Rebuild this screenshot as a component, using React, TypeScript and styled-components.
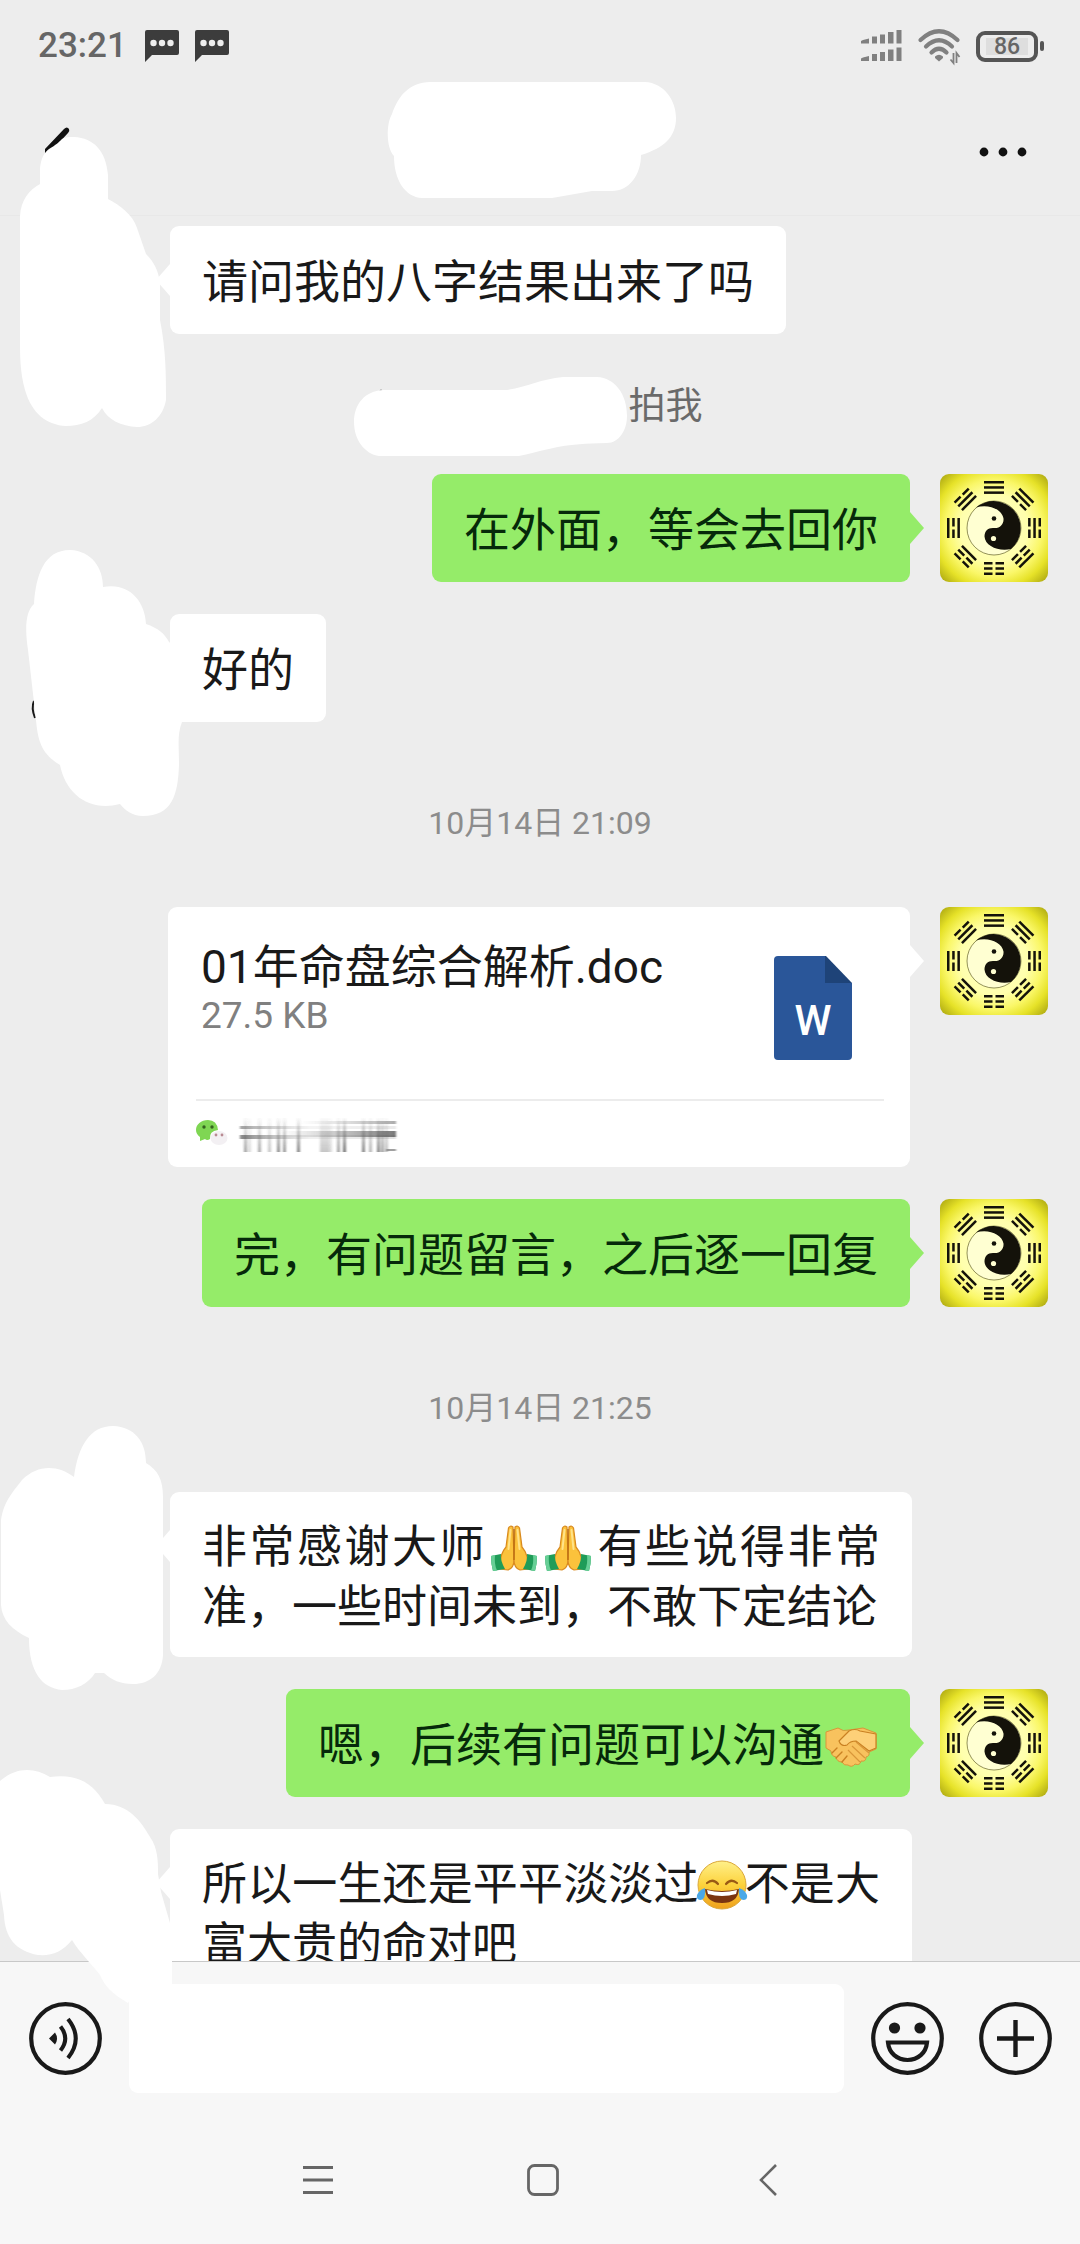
import React from 'react';
import styled, { createGlobalStyle } from 'styled-components';

const FONT = `Roboto, "Noto Sans CJK SC", "Noto Sans", sans-serif`;

const GlobalStyle = createGlobalStyle`
  *, *::before, *::after { box-sizing: border-box; }
  body { margin: 0; background: #ededed; font-family: ${FONT}; }
  button, input { font: inherit; color: inherit; border: 0; padding: 0; background: none; }
  p, h1 { margin: 0; font-weight: 400; }
`;

const Page = styled.div`
  display: flex;
  flex-direction: column;
  height: 100vh;
  overflow: hidden;
  background: #ededed;
  color: #191919;
`;

const StatusBar = styled.div`
  flex: none;
  display: flex;
  align-items: center;
  justify-content: space-between;
  height: 92px;
  padding: 0 36px 0 38px;
`;

const StatusGroup = styled.div`
  display: flex;
  align-items: center;
  gap: 16px;
`;

const Clock = styled.span`
  font-size: 35px;
  line-height: 40px;
  font-weight: 500;
  color: #666;
  margin-right: 2px;
`;

const Battery = styled.div`
  display: flex;
  align-items: center;
  gap: 2px;
  &::after {
    content: '';
    width: 4px;
    height: 10px;
    border-radius: 2px;
    background: #555;
  }
`;

const BatteryBody = styled.span`
  display: grid;
  place-items: center;
  width: 62px;
  height: 31px;
  border: 4px solid #555;
  border-radius: 9px;
  font-size: 23px;
  line-height: 23px;
  font-weight: 500;
  color: #666;
  background: linear-gradient(#dedede, #dedede) center / 42px 17px no-repeat;
`;

const Header = styled.header`
  flex: none;
  display: flex;
  align-items: center;
  justify-content: space-between;
  height: 124px;
  padding: 0 41px 4px;
  border-bottom: 1px solid #e8e8e8;
`;

const HeaderButton = styled.button`
  display: grid;
  place-items: center;
  width: 72px;
  height: 72px;
`;

const Drawing = styled.svg`
  display: block;
  flex: none;
  overflow: visible;
`;

const Chat = styled.main`
  flex: 1;
  min-height: 0;
  display: flex;
  flex-direction: column;
  gap: 32px;
  padding: 10px 32px 0;
  & > * { flex: none; }
`;

const Row = styled.div<{ $mine?: boolean }>`
  display: flex;
  flex-direction: ${p => (p.$mine ? 'row-reverse' : 'row')};
  align-items: flex-start;
  gap: 30px;
`;

const AvatarSlot = styled.div`
  position: relative;
  flex: none;
  width: 108px;
  height: 108px;
`;

const Cover = styled.svg`
  position: absolute;
  inset: 0;
  z-index: 2;
  overflow: visible;
  pointer-events: none;
`;

const Bubble = styled.div<{ $mine?: boolean; $color: string }>`
  position: relative;
  min-height: 108px;
  max-width: calc(100% - 274px);
  border-radius: 9px;
  background: ${p => p.$color};
  &::after {
    content: '';
    position: absolute;
    top: 38px;
    ${p => (p.$mine ? 'left: 100%;' : 'right: 100%;')}
    width: 14px;
    height: 32px;
    background: inherit;
    clip-path: ${p =>
      p.$mine ? 'polygon(0 0, 100% 50%, 0 100%)' : 'polygon(100% 0, 0 50%, 100% 100%)'};
  }
`;

const Message = styled.p<{ $long?: boolean; $mine?: boolean }>`
  padding: 26px 32px 19px;
  font-size: ${p => (p.$long ? 45 : 46)}px;
  line-height: 60px;
  text-align: ${p => (p.$long ? 'justify' : 'left')};
  color: ${p => (p.$mine ? '#06290a' : '#191919')};
`;

const Emoji = styled.svg<{ $gap: number }>`
  display: inline-block;
  width: 52px;
  height: 52px;
  margin: -8px ${p => p.$gap}px;
  vertical-align: -3px;
`;

const TimeStamp = styled.time`
  padding: 51px 0 34px;
  font-size: 32px;
  line-height: 36px;
  text-align: center;
  color: #8c8c8c;
`;

const Notice = styled.p`
  display: flex;
  align-items: center;
  justify-content: center;
  height: 76px;
  padding: 6px 24px 0 0;
  font-size: 37px;
  line-height: 44px;
  color: #6a6a6a;
`;

const FileBubble = styled(Bubble)`
  display: flex;
  flex-direction: column;
  flex: 1;
  padding: 0 26px 0 28px;
`;

const FileTop = styled.div`
  display: flex;
  justify-content: space-between;
  height: 194px;
  padding: 30px 32px 0 5px;
  border-bottom: 2px solid #ececec;
`;

const FileName = styled.h1`
  font-size: 46px;
  line-height: 60px;
`;

const FileSize = styled.p`
  font-size: 37px;
  line-height: 38px;
  color: #808080;
`;

const FileIcon = styled.div`
  display: grid;
  justify-items: center;
  align-items: end;
  flex: none;
  width: 78px;
  height: 104px;
  margin-top: 19px;
  padding-bottom: 14px;
  border-radius: 4px;
  background: linear-gradient(#1e4378, #1e4378) top right / 27px 27px no-repeat, #2a5699;
  clip-path: polygon(0 0, 52px 0, 100% 27px, 100% 100%, 0 100%);
  font-size: 42px;
  line-height: 50px;
  font-weight: 500;
  color: #fff;
`;

const FileSource = styled.div`
  display: flex;
  align-items: center;
  gap: 12px;
  height: 66px;
`;

const Composer = styled.form`
  position: relative;
  z-index: 1;
  flex: none;
  display: flex;
  align-items: center;
  gap: 27px;
  height: 154px;
  padding: 0 28px 0 29px;
  border-top: 1px solid #c8c8c8;
  background: #f7f7f7;
`;

const Field = styled.input`
  flex: 1;
  min-width: 0;
  height: 109px;
  padding: 0 24px;
  border-radius: 9px;
  background: #fff;
  font-size: 46px;
  outline: none;
`;

const ToolGroup = styled.div`
  display: flex;
  gap: 35px;
`;

const Tool = styled.button`
  display: block;
  width: 73px;
  height: 73px;
`;

const NavBar = styled.nav`
  position: relative;
  flex: none;
  display: flex;
  align-items: center;
  justify-content: center;
  gap: 165px;
  height: 129px;
  padding-left: 6px;
  background: #f7f7f7;
`;

const NavButton = styled.button`
  display: grid;
  place-items: center;
  width: 60px;
  height: 60px;
`;

const ChatGlyph = () => (
  <Drawing width="34" height="32" viewBox="0 0 34 32" aria-hidden="true">
    <path d="M2 0H32Q34 0 34 2V23Q34 25 32 25H7L0 32V2Q0 0 2 0Z" fill="#3c3c3c" />
    <g fill="#eee">
      <circle cx="8.5" cy="13" r="3.2" />
      <circle cx="17" cy="13" r="3.2" />
      <circle cx="25.5" cy="13" r="3.2" />
    </g>
  </Drawing>
);

const Signal = () => (
  <Drawing width="41" height="32" viewBox="0 0 41 32" aria-hidden="true">
    {[0, 17.5].map(y => (
      <g key={y} fill="#808080" transform={`translate(0 ${y})`}>
        <path d="M0 11L2 10L8 8.500V13.500H0Z" />
        <rect x="11" y="6.500" width="5" height="7" />
        <rect x="19" y="4.500" width="5" height="9" />
        <rect x="27" y="2" width="5.500" height="11.500" />
        <rect x="35.500" y="0" width="5" height="13.500" />
      </g>
    ))}
  </Drawing>
);

const Wifi = () => (
  <Drawing width="42" height="35" viewBox="0 0 42 35" aria-hidden="true">
    <g fill="none" stroke="#808080" strokeWidth="4.200" strokeLinecap="round">
      <path d="M2.500 11Q21 -6.500 39.500 11" />
      <path d="M8 17.500Q21 5 34 17.500" />
      <path d="M13.500 23.500Q21 16 28.500 23.500" />
    </g>
    <path d="M17 27.500Q21 24 25 27.500V29L21 32.500L17 29Z" fill="#808080" />
    <path d="M35.500 24V34L32.500 30.500M38.500 34V24L41.500 28" fill="none" stroke="#808080" strokeWidth="1.800" />
  </Drawing>
);

const TRIGRAMS = ['111', '110', '010', '100', '000', '001', '101', '011'];

const Avatar = ({ id }: { id: string }) => (
  <AvatarSlot>
    <Drawing width="108" height="108" viewBox="0 0 108 108" role="img" aria-label="头像">
      <defs>
        <radialGradient id={id} cx="50%" cy="50%" r="70%">
          <stop offset="0" stopColor="#ffffc8" />
          <stop offset="0.45" stopColor="#ffffac" />
          <stop offset="0.64" stopColor="#faf768" />
          <stop offset="0.8" stopColor="#e6e228" />
          <stop offset="1" stopColor="#a9a410" />
        </radialGradient>
      </defs>
      <rect width="108" height="108" rx="9" fill={`url(#${id})`} />
      {TRIGRAMS.map((lines, i) => (
        <g key={i} transform={`rotate(${i * 45} 54 54)`} fill="#14120a">
          {lines.split('').map((solid, j) => {
            const y = 7 + j * 5.2;
            return solid === '1' ? (
              <rect key={j} x="44" y={y} width="20" height="2.500" />
            ) : (
              <path key={j} d={`M44 ${y}h8.500v2.500h-8.500zM55.500 ${y}h8.500v2.500h-8.500z`} />
            );
          })}
        </g>
      ))}
      <circle cx="54" cy="54" r="27" fill="#ffffd2" stroke="#4a4610" strokeWidth="0.600" />
      <path
        d="M36 33.500A27 27 0 0 1 71 75C59 78 45 72 44.500 62.500C44.500 57 48 53.500 54 54C60 54.500 64 50 63.500 44.500C62 35 48 29.500 36 33.500Z"
        fill="#14120a"
      />
      <circle cx="54" cy="44.500" r="2.300" fill="#14120a" />
      <circle cx="53.500" cy="64.500" r="2.600" fill="#ffffd2" />
    </Drawing>
  </AvatarSlot>
);

const CoveredAvatar = ({ top, d, mark }: { top: number; d: string; mark?: string }) => (
  <AvatarSlot>
    <Cover width="108" height="108" viewBox={`32 ${top} 108 108`} aria-hidden="true">
      {mark && <path d={mark} fill="none" stroke="#191919" strokeWidth="2" />}
      <path d={d} fill="#fff" />
    </Cover>
  </AvatarSlot>
);

const Pray = () => (
  <Emoji $gap={1} viewBox="0 0 52 52" role="img" aria-label="双手合十">
    <path d="M25 5Q22 3 20.500 6L18 25Q11 33 12 47L20 48Q26 46 26 38Z" fill="#fbc23c" stroke="#d98a1e" strokeWidth="1.200" />
    <path d="M27 5Q30 3 31.500 6L34 25Q41 33 40 47L32 48Q26 46 26 38Z" fill="#fbc23c" stroke="#d98a1e" strokeWidth="1.200" />
    <path d="M22.500 8L20.500 27M29.500 8L31.500 27" stroke="#ffe38a" strokeWidth="2" strokeLinecap="round" />
    <path d="M26 7V38" stroke="#b96a10" strokeWidth="1.300" />
    <path d="M3 34L13 32Q12 38 17 47L5 49Q3 42 3 34Z" fill="#1f9c58" />
    <path d="M49 34L39 32Q40 38 35 47L47 49Q49 42 49 34Z" fill="#1f9c58" />
    <path d="M3 34L7 33Q6 42 9 48.500L5 49Q3 42 3 34Z" fill="#67cf96" />
    <path d="M49 34L45 33Q46 42 43 48.500L47 49Q49 42 49 34Z" fill="#67cf96" />
  </Emoji>
);

const Handshake = () => (
  <Emoji $gap={1} viewBox="0 0 52 52" role="img" aria-label="握手">
    <path d="M1 12L13 8Q18 12 24 10L38 8L51 13V29L44 32Q45 36 41 37Q41 42 36 41Q35 46 30 44Q27 48 23 45Q19 46 17 42Q12 42 11 37Q6 36 6 31L1 28Z" fill="#f8c25e" stroke="#d9973a" strokeWidth="1" />
    <path d="M14 21L24 11Q30 8 35 11L51 14V28L44 31L31 21Q25 21 22 25Q16 27 14 21Z" fill="#fdd078" stroke="#c98022" strokeWidth="1.200" strokeLinejoin="round" />
    <path d="M31 22L44 33M27 26L40 38M23 30L35 42" fill="none" stroke="#d9973a" strokeWidth="1.200" />
    <path d="M7 33L12 28M11 38L17 32M17 42L22 36" stroke="#c98022" strokeWidth="1.400" strokeLinecap="round" />
  </Emoji>
);

const Joy = () => (
  <Emoji $gap={-3} viewBox="0 0 52 52" role="img" aria-label="笑哭">
    <defs>
      <linearGradient id="joy" x1="0" y1="0" x2="0" y2="1">
        <stop offset="0" stopColor="#fff08a" />
        <stop offset="0.500" stopColor="#fcd23c" />
        <stop offset="1" stopColor="#efa01c" />
      </linearGradient>
    </defs>
    <circle cx="26" cy="26" r="24" fill="url(#joy)" stroke="#dba83a" strokeWidth="1" />
    <path d="M11 24Q17 19 22 25M30 25Q35 19 41 24" fill="none" stroke="#9a5a14" strokeWidth="2.200" strokeLinecap="round" />
    <path d="M9 30Q26 34 43 30Q42 44 26 44Q10 44 9 30Z" fill="#7a3410" />
    <path d="M11 31Q26 35 41 31L40 35Q26 39 12 35Z" fill="#fff" />
    <path d="M9 29Q10 40 5 41Q0 41 1 36Q3 31 9 29Z" fill="#4aa8e8" />
    <path d="M43 29Q42 40 47 41Q52 41 51 36Q49 31 43 29Z" fill="#4aa8e8" />
  </Emoji>
);

const WeChatMark = () => (
  <Drawing width="32" height="34" viewBox="0 0 32 34" aria-hidden="true">
    <path d="M12 3C5 3 0 7.500 0 13Q0 17 4 20L4 24L9 22Q11 24 14 22Q13 14 22 13Q21 3 12 3Z" fill="#7fd653" />
    <circle cx="8" cy="10" r="1.700" fill="#35641f" />
    <circle cx="16" cy="10" r="1.700" fill="#35641f" />
    <ellipse cx="23" cy="21" rx="8.500" ry="7" fill="#f3f0f3" />
    <circle cx="20" cy="18" r="1.400" fill="#b98a92" />
    <circle cx="26" cy="18" r="1.400" fill="#b98a92" />
  </Drawing>
);

const SMEAR_BARS = [
  [4, 0.5], [8, 0.2], [18, 0.45], [28, 0.3], [37, 0.6], [43, 0.55], [57, 0.65],
  [80, 0.3], [83, 0.3], [86, 0.3], [89, 0.2], [97, 0.5], [103, 0.75], [122, 0.65],
  [129, 0.4], [137, 0.65], [141, 0.5], [145, 0.35],
];

const Smear = () => (
  <Drawing width="158" height="38" viewBox="0 0 158 38" aria-hidden="true">
    <defs>
      <linearGradient id="fall" x1="0" y1="0" x2="0" y2="1">
        <stop offset="0" stopColor="#444" stopOpacity="0.05" />
        <stop offset="1" stopColor="#444" />
      </linearGradient>
      <linearGradient id="across" x1="0" y1="0" x2="1" y2="0">
        <stop offset="0" stopColor="#444" stopOpacity="0.8" />
        <stop offset="0.450" stopColor="#888" stopOpacity="0.150" />
        <stop offset="1" stopColor="#444" stopOpacity="0.2" />
      </linearGradient>
      <linearGradient id="rise" x1="0" y1="0" x2="1" y2="0">
        <stop offset="0" stopColor="#888" stopOpacity="0" />
        <stop offset="1" stopColor="#444" stopOpacity="0.9" />
      </linearGradient>
      <filter id="soft" x="-5%" y="-10%" width="110%" height="120%">
        <feGaussianBlur stdDeviation="0.9 0.5" />
      </filter>
    </defs>
    <g filter="url(#soft)">
      {SMEAR_BARS.map(([x, o]) => (
        <rect key={x} x={x} y="3" width="3" height="34" fill="url(#fall)" opacity={o} />
      ))}
      <rect x="0" y="11" width="156" height="3" fill="url(#across)" opacity="0.6" />
      <rect x="0" y="20" width="156" height="4" fill="url(#across)" opacity="0.8" />
      <rect x="40" y="16" width="116" height="6" fill="url(#rise)" opacity="0.8" />
      <rect x="60" y="6" width="96" height="3" fill="url(#rise)" opacity="0.5" />
      <rect x="146" y="34" width="10" height="2" fill="#777" opacity="0.7" />
    </g>
  </Drawing>
);

export default function App() {
  return (
    <Page>
      <GlobalStyle />
      <StatusBar>
        <StatusGroup>
          <Clock>23:21</Clock>
          <ChatGlyph />
          <ChatGlyph />
        </StatusGroup>
        <StatusGroup>
          <Signal />
          <Wifi />
          <Battery>
            <BatteryBody>86</BatteryBody>
          </Battery>
        </StatusGroup>
      </StatusBar>

      <Header>
        <HeaderButton type="button" aria-label="返回">
          <Drawing width="72" height="72" viewBox="41 116 72 72" aria-hidden="true">
            <path d="M45 153L45 149L64 129Q67 126 69 129Q70 131 68 133L56 146L46 153Z" fill="#111" />
          </Drawing>
        </HeaderButton>
        <Drawing width="290" height="119" viewBox="395 92 290 119" aria-hidden="true">
          <path
            d="M430 82H645C664 83 676 100 676 118C676 137 664 148 641 155C641 175 629 191 612 191H592L552 198H422C405 197 394 180 394 156C386 148 386 124 392 114C399 94 410 83 430 82Z"
            fill="#fff"
          />
        </Drawing>
        <HeaderButton type="button" aria-label="更多">
          <Drawing width="48" height="10" viewBox="0 0 48 10" aria-hidden="true">
            <circle cx="5" cy="5" r="4.400" fill="#111" />
            <circle cx="24" cy="5" r="4.400" fill="#111" />
            <circle cx="43" cy="5" r="4.400" fill="#111" />
          </Drawing>
        </HeaderButton>
      </Header>

      <Chat>
        <Row>
          <CoveredAvatar
            top={226}
            d="M40 184V168C41 158 44 153 49 149C56 145 59 142 62 139C66 137 69 137 74 137C94 138 106 151 108 175V199C120 205 133 215 137 228L146 254C154 262 158 270 160 282V320C166 350 166 375 166 400C163 417 151 427 137 427C121 426 108 420 102 408C94 421 81 426 66 426C47 425 32 414 25 390C20 372 20 355 20 340V216C21 200 29 190 40 184Z"
          />
          <Bubble $color="#fff">
            <Message>请问我的八字结果出来了吗</Message>
          </Bubble>
        </Row>

        <Notice>
          <Drawing width="275" height="72" viewBox="353 371 275 72" aria-hidden="true">
            <circle cx="380" cy="391" r="1.500" fill="#777" />
            <path
              d="M382 390H506C526 387 540 379 562 377H596C614 378 626 394 626 416C626 430 618 443 606 443C560 444 558 447 518 456H378C364 454 353 440 353 422C353 404 364 391 382 390Z"
              fill="#fff"
            />
          </Drawing>
          拍我
        </Notice>

        <Row $mine>
          <Avatar id="gold1" />
          <Bubble $mine $color="#95ec69">
            <Message $mine>在外面，等会去回你</Message>
          </Bubble>
        </Row>

        <Row>
          <CoveredAvatar
            top={614}
            mark="M34 701Q31 708 35 718"
            d="M34 604C36 575 44 550 70 550C92 551 103 568 103 587C128 582 145 600 146 624C158 628 165 634 169 642L182 652V722C177 735 179 745 179 765C178 795 172 816 143 816C132 816 125 810 120 804C90 812 66 795 60 765C44 755 38 745 36 720L28 650C25 630 25 612 34 604Z"
          />
          <Bubble $color="#fff">
            <Message>好的</Message>
          </Bubble>
        </Row>

        <TimeStamp>10月14日 21:09</TimeStamp>

        <Row $mine>
          <Avatar id="gold2" />
          <FileBubble $mine $color="#fff">
            <FileTop>
              <div>
                <FileName>01年命盘综合解析.doc</FileName>
                <FileSize>27.5 KB</FileSize>
              </div>
              <FileIcon>W</FileIcon>
            </FileTop>
            <FileSource>
              <WeChatMark />
              <Smear />
            </FileSource>
          </FileBubble>
        </Row>

        <Row $mine>
          <Avatar id="gold3" />
          <Bubble $mine $color="#95ec69">
            <Message $mine>完，有问题留言，之后逐一回复</Message>
          </Bubble>
        </Row>

        <TimeStamp>10月14日 21:25</TimeStamp>

        <Row>
          <CoveredAvatar
            top={1492}
            d="M74 1477C78 1446 90 1426 113 1426C135 1427 146 1442 146 1463C158 1470 163 1480 163 1497V1655C162 1674 150 1684 133 1684C120 1684 112 1680 104 1673H95C88 1684 76 1690 62 1690C42 1688 29 1672 29 1638C12 1630 2 1620 1 1605V1520C4 1500 14 1491 22 1480C38 1464 58 1465 74 1477Z"
          />
          <Bubble $color="#fff">
            <Message $long>
              非常感谢大师
              <Pray />
              <Pray />
              有些说得非常准，一些时间未到，不敢下定结论
            </Message>
          </Bubble>
        </Row>

        <Row $mine>
          <Avatar id="gold4" />
          <Bubble $mine $color="#95ec69">
            <Message $mine>
              嗯，后续有问题可以沟通
              <Handshake />
            </Message>
          </Bubble>
        </Row>

        <Row>
          <CoveredAvatar
            top={1829}
            d="M0 1781C16 1767 34 1767 50 1777C78 1773 94 1784 105 1804C128 1804 141 1821 150 1837C158 1848 158 1862 158 1874L161 1892L172 1930V1984H140L128 2003C112 1994 104 1985 100 1975C90 1962 80 1953 72 1940C62 1952 52 1956 38 1955C16 1951 5 1938 4 1915L0 1890Z"
          />
          <Bubble $color="#fff">
            <Message $long>
              所以一生还是平平淡淡过
              <Joy />
              不是大富大贵的命对吧
            </Message>
          </Bubble>
        </Row>
      </Chat>

      <Composer onSubmit={e => e.preventDefault()}>
        <Tool type="button" aria-label="语音">
          <Drawing width="73" height="73" viewBox="0 0 73 73" aria-hidden="true">
            <circle cx="36.500" cy="36.500" r="34.300" fill="none" stroke="#191919" strokeWidth="4.200" />
            <path d="M20 36.500L26 30.500Q30 36.500 26 42.500Z" fill="#191919" />
            <path d="M31.500 24.500Q41 36.500 31.500 48.500M39 17Q54.500 36.500 39 56" fill="none" stroke="#191919" strokeWidth="4" />
          </Drawing>
        </Tool>
        <Field type="text" aria-label="输入消息" />
        <ToolGroup>
          <Tool type="button" aria-label="表情">
            <Drawing width="73" height="73" viewBox="0 0 73 73" aria-hidden="true">
              <circle cx="36.500" cy="36.500" r="34.300" fill="none" stroke="#191919" strokeWidth="4.200" />
              <circle cx="23.500" cy="26" r="5.600" fill="#191919" />
              <circle cx="49" cy="26" r="5.600" fill="#191919" />
              <path d="M17 40.500H56C55 51 47 58 36.500 58C26 58 18 51 17 40.500Z" fill="none" stroke="#191919" strokeWidth="4.200" />
            </Drawing>
          </Tool>
          <Tool type="button" aria-label="更多功能">
            <Drawing width="73" height="73" viewBox="0 0 73 73" aria-hidden="true">
              <circle cx="36.500" cy="36.500" r="34.300" fill="none" stroke="#191919" strokeWidth="4.200" />
              <path d="M36.500 18V55M18 36.500H55" stroke="#191919" strokeWidth="4.400" />
            </Drawing>
          </Tool>
        </ToolGroup>
      </Composer>

      <NavBar>
        <NavButton type="button" aria-label="最近任务">
          <Drawing width="30" height="28" viewBox="0 0 30 28" aria-hidden="true">
            <path d="M0 1.500H30M0 14H30M0 26.500H30" stroke="#666" strokeWidth="2.800" />
          </Drawing>
        </NavButton>
        <NavButton type="button" aria-label="主屏幕">
          <Drawing width="32" height="32" viewBox="0 0 32 32" aria-hidden="true">
            <rect x="1.500" y="1.500" width="29" height="29" rx="6" fill="none" stroke="#666" strokeWidth="2.800" />
          </Drawing>
        </NavButton>
        <NavButton type="button" aria-label="后退">
          <Drawing width="18" height="32" viewBox="0 0 18 32" aria-hidden="true">
            <path d="M17 1L2 16L17 31" fill="none" stroke="#666" strokeWidth="2.600" />
          </Drawing>
        </NavButton>
      </NavBar>
    </Page>
  );
}
